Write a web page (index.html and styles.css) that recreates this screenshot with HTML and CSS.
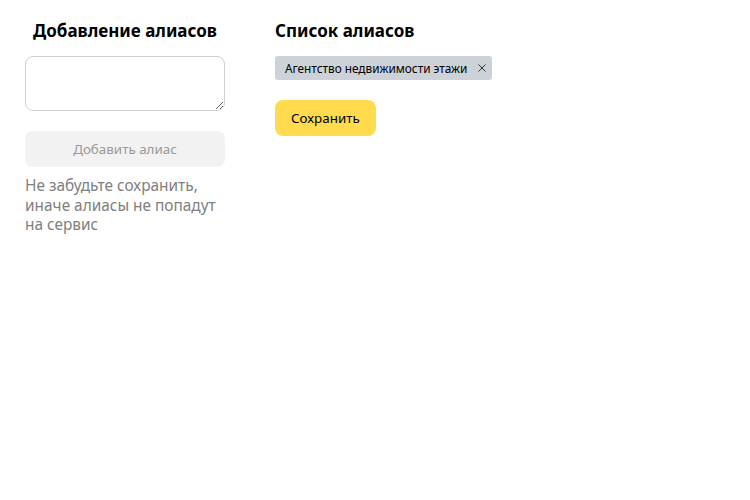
FILE: index.html
```html
<!DOCTYPE html>
<html lang="ru">
<head>
<meta charset="utf-8">
<link rel="stylesheet" href="styles.css">
</head>
<body>
<div class="page">
  <section class="col col-add">
    <h2 class="title title-center">Добавление алиасов</h2>
    <textarea class="input"></textarea>
    <button class="btn btn-disabled" disabled>Добавить алиас</button>
    <p class="hint">Не забудьте сохранить, иначе алиасы не попадут на сервис</p>
  </section>
  <section class="col col-list">
    <h2 class="title">Список алиасов</h2>
    <div class="chips">
      <span class="chip">Агентство недвижимости этажи<svg class="chip-x" width="8" height="8" viewBox="0 0 8 8"><path d="M0.5 0.5L7.5 7.5M7.5 0.5L0.5 7.5" stroke="#333" stroke-width="1" fill="none"/></svg></span>
    </div>
    <button class="btn btn-save">Сохранить</button>
  </section>
</div>
</body>
</html>
```

FILE: styles.css
```css
* { box-sizing: border-box; }
html, body { margin: 0; padding: 0; background: #fff; }
body { font-family: "Noto Sans", "Open Sans", sans-serif; color: #000; }
.page { display: flex; gap: 50px; padding: 19px 25px; }
.col { display: flex; flex-direction: column; align-items: flex-start; }
.col-add { width: 200px; }
.title { margin: 0 0 13px; font-size: 17px; line-height: 24px; font-weight: 700; }
.title-center { align-self: stretch; text-align: center; }
.input { width: 200px; height: 55px; border: 1px solid #d0d0d0; border-radius: 8px; resize: vertical; margin: 0; padding: 6px 10px; font: inherit; }
.btn { border: 0; border-radius: 8px; height: 36px; font-family: inherit; font-size: 13.4px; padding: 0 16px; }
.btn-disabled { width: 200px; margin-top: 20px; background: #f2f2f2; color: #999; }
.hint { margin: 9px 0 0; font-size: 15.4px; line-height: 19.5px; color: #808080; }
.chips { display: flex; gap: 6px; }
.chip { display: inline-flex; align-items: center; height: 24px; padding: 0 6px 0 10px; background: #cdd1d8; border-radius: 3px; font-size: 11.8px; }
.chip-x { margin-left: 11px; }
.btn-save { margin-top: 20px; background: #ffdb4d; color: #000; padding: 0 16px; }
```
